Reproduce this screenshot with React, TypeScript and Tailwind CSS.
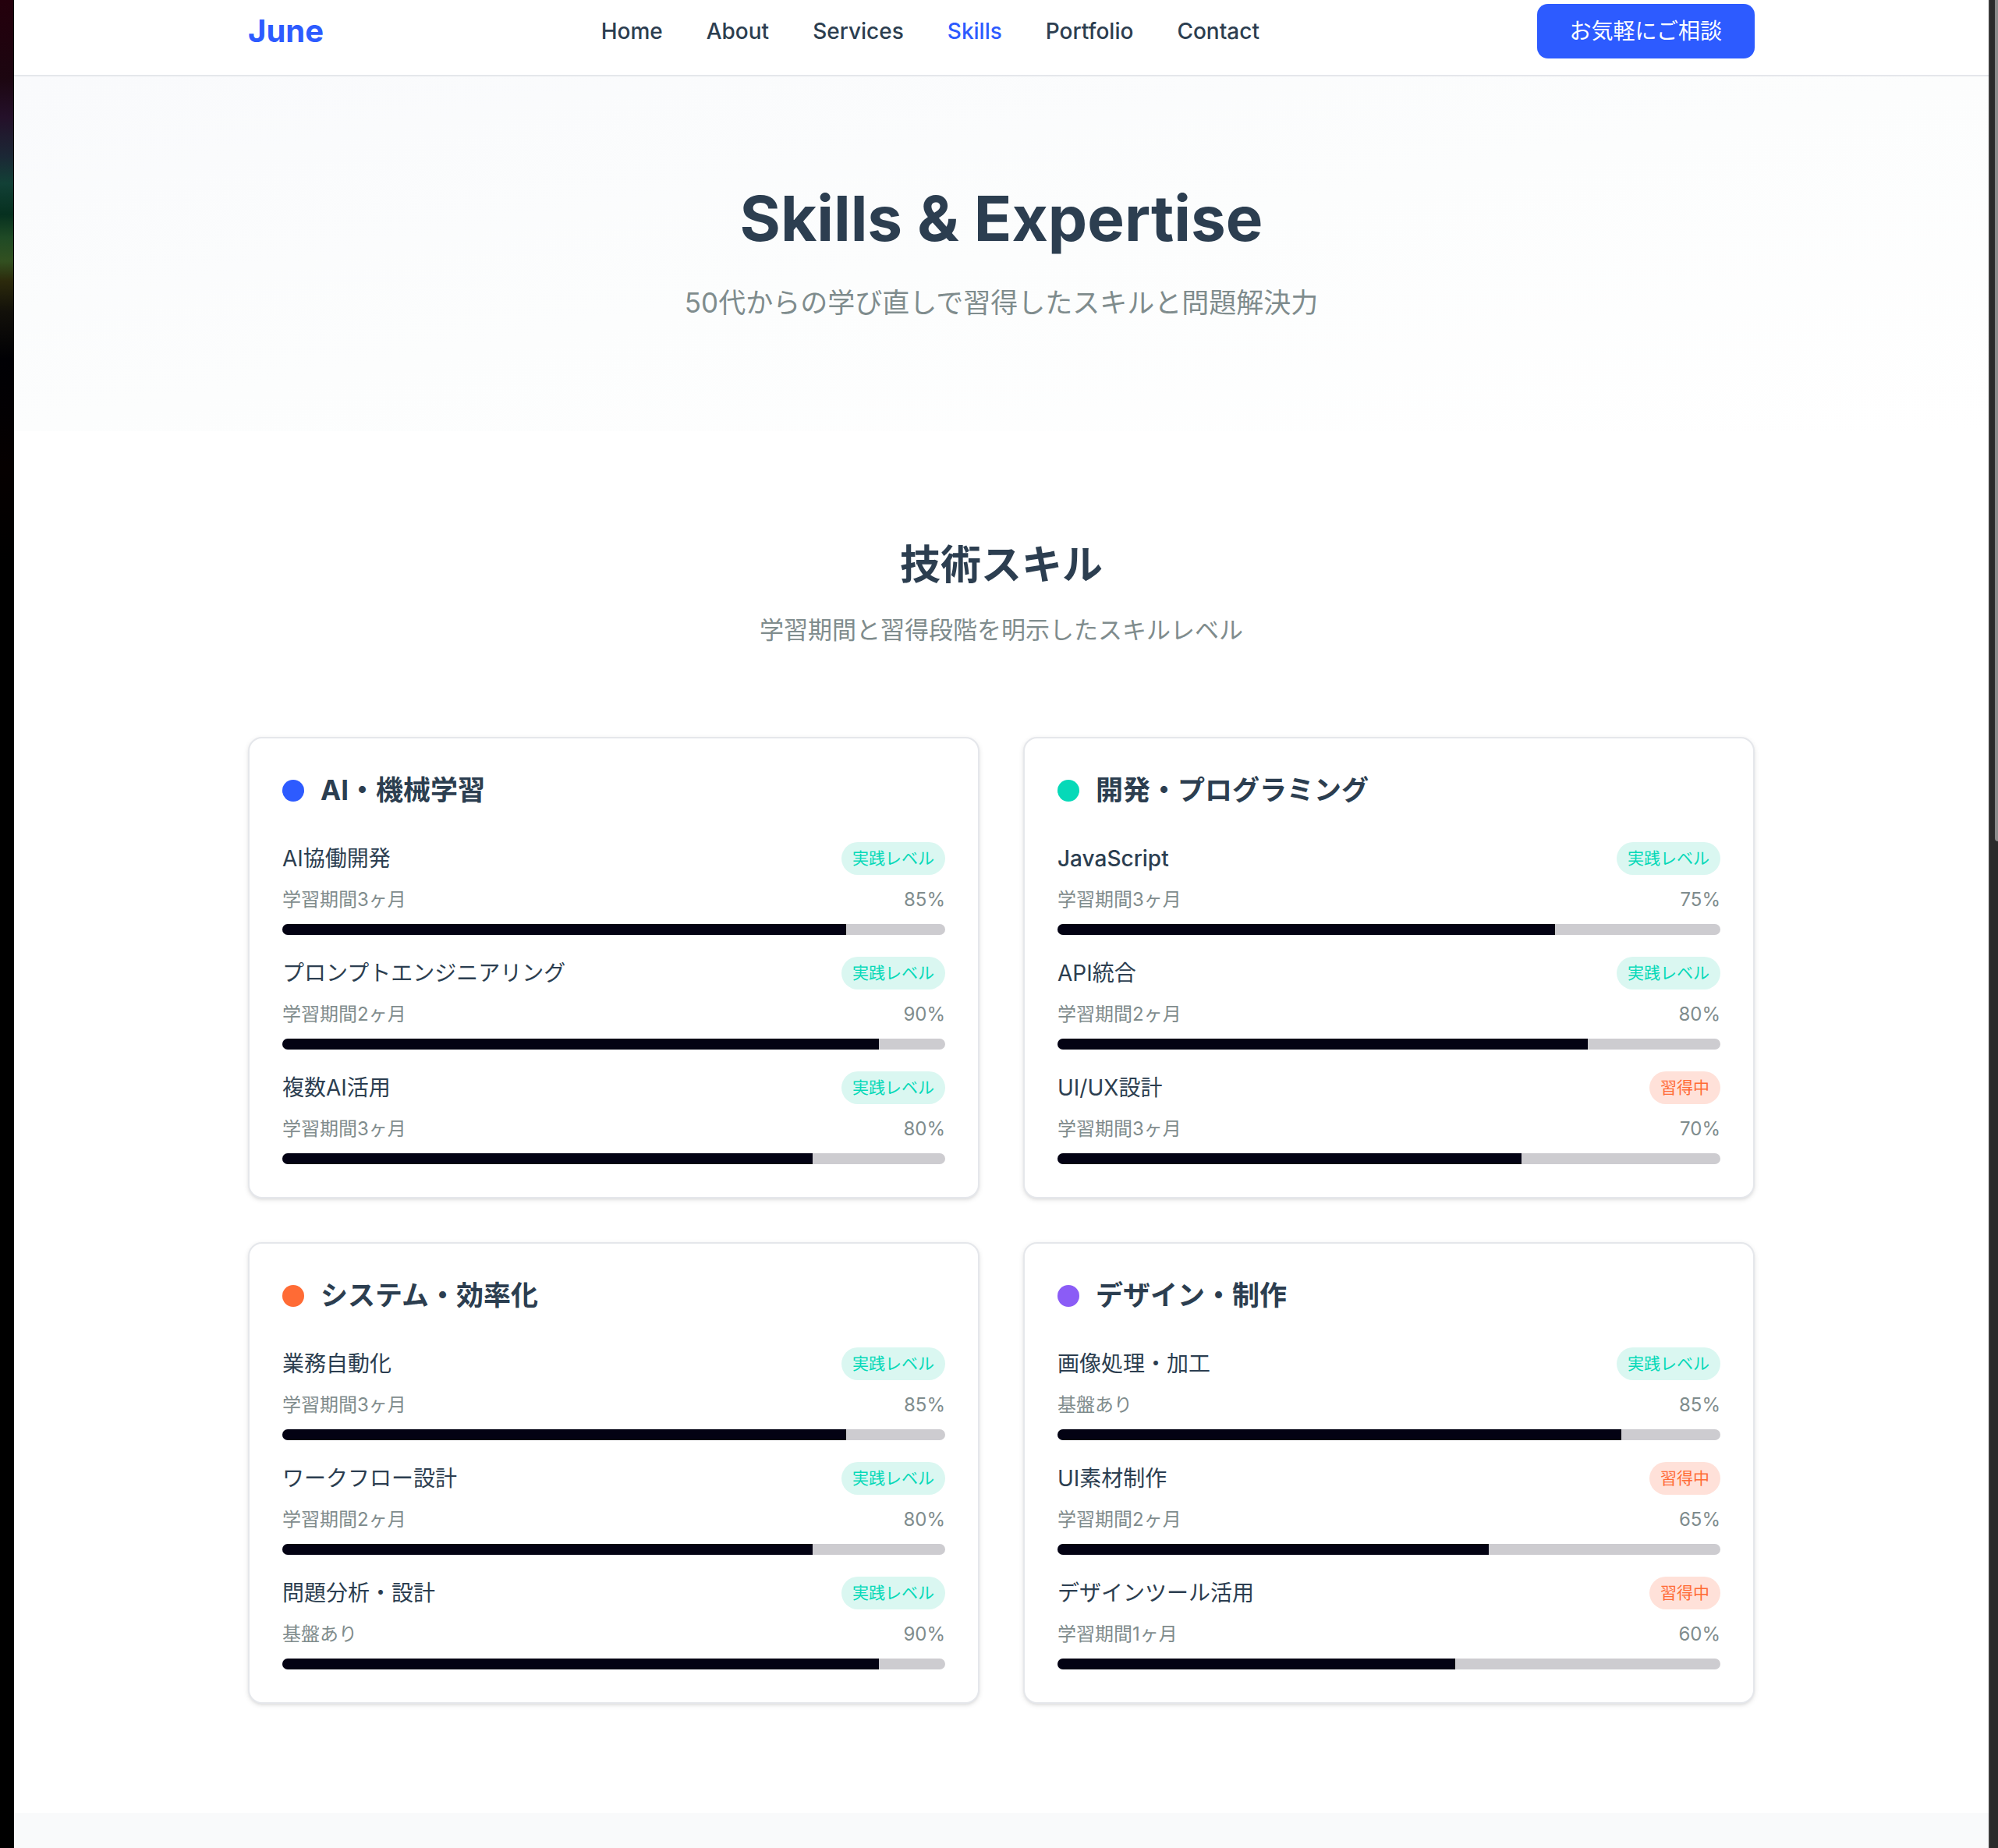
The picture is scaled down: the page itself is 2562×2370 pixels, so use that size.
type Level = "実践レベル" | "習得中";

interface Skill {
  name: string;
  period: string;
  value: number;
  level: Level;
}

interface Category {
  title: string;
  dot: string;
  skills: Skill[];
}

const NAV = ["Home", "About", "Services", "Skills", "Portfolio", "Contact"];

const CATEGORIES: Category[] = [
  {
    title: "AI・機械学習",
    dot: "bg-[#2d5bff]",
    skills: [
      { name: "AI協働開発", period: "学習期間3ヶ月", value: 85, level: "実践レベル" },
      { name: "プロンプトエンジニアリング", period: "学習期間2ヶ月", value: 90, level: "実践レベル" },
      { name: "複数AI活用", period: "学習期間3ヶ月", value: 80, level: "実践レベル" },
    ],
  },
  {
    title: "開発・プログラミング",
    dot: "bg-[#06d9b8]",
    skills: [
      { name: "JavaScript", period: "学習期間3ヶ月", value: 75, level: "実践レベル" },
      { name: "API統合", period: "学習期間2ヶ月", value: 80, level: "実践レベル" },
      { name: "UI/UX設計", period: "学習期間3ヶ月", value: 70, level: "習得中" },
    ],
  },
  {
    title: "システム・効率化",
    dot: "bg-[#ff6b35]",
    skills: [
      { name: "業務自動化", period: "学習期間3ヶ月", value: 85, level: "実践レベル" },
      { name: "ワークフロー設計", period: "学習期間2ヶ月", value: 80, level: "実践レベル" },
      { name: "問題分析・設計", period: "基盤あり", value: 90, level: "実践レベル" },
    ],
  },
  {
    title: "デザイン・制作",
    dot: "bg-[#8b5cf6]",
    skills: [
      { name: "画像処理・加工", period: "基盤あり", value: 85, level: "実践レベル" },
      { name: "UI素材制作", period: "学習期間2ヶ月", value: 65, level: "習得中" },
      { name: "デザインツール活用", period: "学習期間1ヶ月", value: 60, level: "習得中" },
    ],
  },
];

const LEVEL_STYLE: Record<Level, string> = {
  実践レベル: "bg-[#daf7f1] text-[#06d9b8]",
  習得中: "bg-[#ffe1d9] text-[#ff6b35]",
};

// Latin-only names carry a medium weight; Japanese names stay regular.
const isLatin = (text: string) => /^[\x20-\x7e]+$/.test(text);

function Header() {
  return (
    <header className="border-b-2 border-[#e5e7eb] bg-white pt-[5px] pb-[21px]">
      <div className="mx-auto flex max-w-[1932px] items-center justify-between">
        <a href="#top" className="text-[40px] leading-[56px] font-bold text-[#2d5bff]">
          June
        </a>
        <nav className="flex gap-14">
          {NAV.map((item) => (
            <a
              key={item}
              href={`#${item.toLowerCase()}`}
              aria-current={item === "Skills" ? "page" : undefined}
              className={`text-[28px] leading-[42px] font-medium ${item === "Skills" ? "text-[#2d5bff]" : "text-[#2c3e50]"}`}
            >
              {item}
            </a>
          ))}
        </nav>
        <button
          type="button"
          className="rounded-[14px] bg-[#2d5bff] px-[42px] py-[14px] text-[28px] leading-[42px] font-normal text-white"
        >
          お気軽にご相談
        </button>
      </div>
    </header>
  );
}

function SkillRow({ skill }: { skill: Skill }) {
  return (
    <li className="flex flex-col gap-[14px]">
      <div className="flex items-center justify-between">
        <span
          className={`text-[28px] leading-[42px] text-[#2c3e50] ${isLatin(skill.name) ? "font-medium" : "font-normal"}`}
        >
          {skill.name}
        </span>
        <span className={`rounded-full px-[14px] text-[21px] leading-[42px] ${LEVEL_STYLE[skill.level]}`}>
          {skill.level}
        </span>
      </div>
      <div className="flex items-center justify-between text-[24px] leading-[35px] text-[#7f8c8d]">
        <span>{skill.period}</span>
        <span>{skill.value}%</span>
      </div>
      <div
        role="progressbar"
        aria-label={skill.name}
        aria-valuenow={skill.value}
        aria-valuemin={0}
        aria-valuemax={100}
        className="h-[14px] overflow-hidden rounded-full bg-[#cdccd0]"
      >
        <div className="h-full bg-[#030213]" style={{ width: `${skill.value}%` }} />
      </div>
    </li>
  );
}

function SkillCard({ category }: { category: Category }) {
  return (
    <article className="rounded-[18px] border-2 border-[#e5e7eb] bg-white p-[42px] shadow-[0_2px_6px_rgba(0,0,0,0.1),0_2px_4px_-2px_rgba(0,0,0,0.1)]">
      <h3 className="flex items-center gap-[21px] text-[35px] leading-[49px] font-bold text-[#2c3e50]">
        <span className={`size-7 rounded-full ${category.dot}`} />
        {category.title}
      </h3>
      <ul className="mt-[42px] flex flex-col gap-7">
        {category.skills.map((skill) => (
          <SkillRow key={skill.name} skill={skill} />
        ))}
      </ul>
    </article>
  );
}

export default function App() {
  return (
    <div
      id="top"
      lang="ja"
      className="flex min-h-screen bg-black font-['Inter','Noto_Sans_CJK_JP',sans-serif]"
    >
      <div className="w-[18px] shrink-0 border-r border-black bg-[linear-gradient(180deg,#24000c_0px,#1c0610_100px,#241029_150px,#1b2735_200px,#124036_235px,#06301f_275px,#1f4a25_305px,#325020_335px,#2c2a0c_360px,#12100a_400px,#000004_460px,#050000_600px,#000000_720px)]" />
      <div className="flex min-w-0 flex-1 flex-col bg-white">
        <Header />
        <main className="flex flex-1 flex-col">
          <section className="bg-[linear-gradient(to_bottom_right,#f9fafc,#fcfdfd_50%,#ffffff)] py-[140px] text-center">
            <h1 className="text-[80px] leading-[84px] font-bold text-[#2c3e50]">Skills &amp; Expertise</h1>
            <p className="mt-[42px] text-[35px] leading-[49px] text-[#7f8c8d]">
              50代からの学び直しで習得したスキルと問題解決力
            </p>
          </section>
          <section className="py-[140px]">
            <div className="mx-auto max-w-[1932px]">
              <div className="text-center">
                <h2 className="text-[52px] leading-[64px] font-bold text-[#2c3e50]">技術スキル</h2>
                <p className="mt-7 text-[31px] leading-[46px] text-[#7f8c8d]">
                  学習期間と習得段階を明示したスキルレベル
                </p>
              </div>
              <div className="mt-[114px] grid grid-cols-2 gap-14">
                {CATEGORIES.map((category) => (
                  <SkillCard key={category.title} category={category} />
                ))}
              </div>
            </div>
          </section>
          <section className="flex-1 bg-[#f9fafb]" />
        </main>
      </div>
      <div className="w-3 shrink-0 overflow-hidden border-l-2 border-[#3a3a3a] bg-[#2b2b2b] pl-[6px]">
        <div className="h-[1079px] rounded-bl-[8px] bg-[#8b8b8b]" />
      </div>
    </div>
  );
}
